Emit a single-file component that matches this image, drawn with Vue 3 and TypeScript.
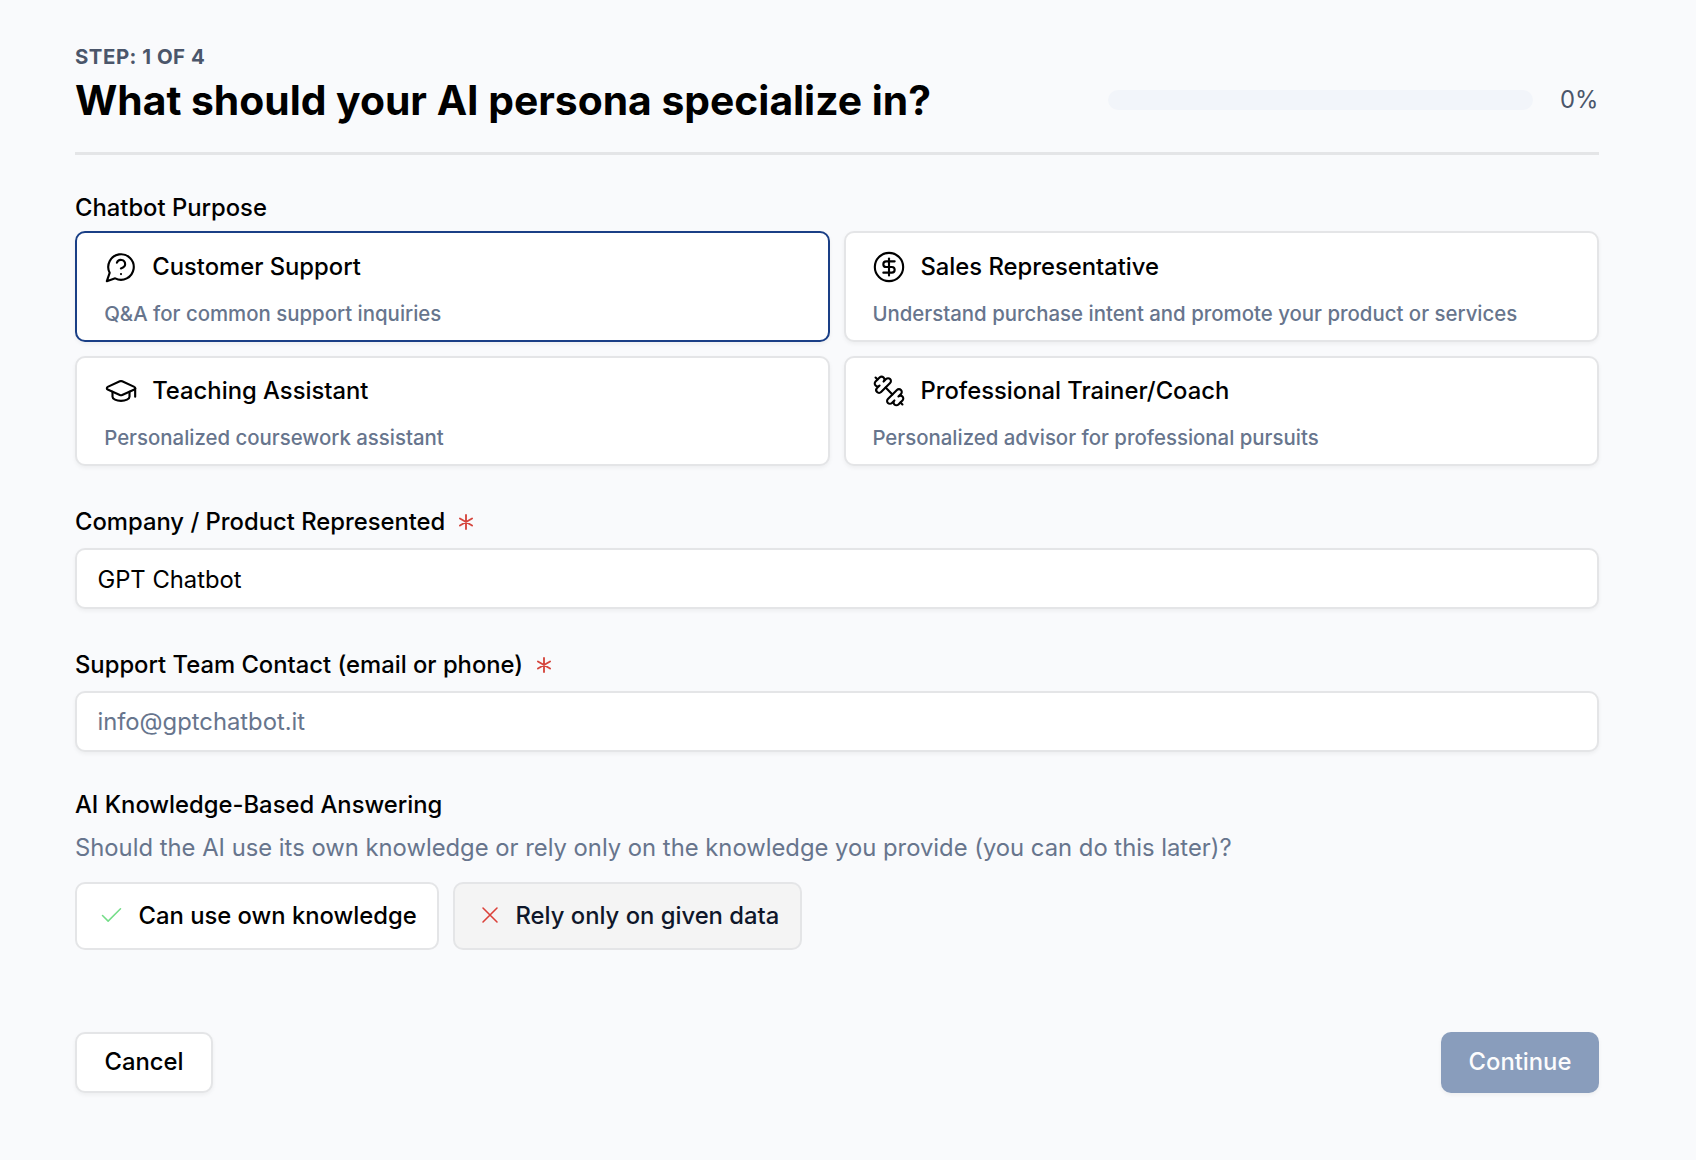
<script setup lang="ts">
import { ref } from 'vue'

interface Purpose {
  id: string
  title: string
  description: string
  paths: string[]
}

const purposes: Purpose[] = [
  {
    id: 'support',
    title: 'Customer Support',
    description: 'Q&A for common support inquiries',
    paths: ['M7.9 20A9 9 0 1 0 4 16.1L2 22Z', 'M9.09 9a3 3 0 0 1 5.83 1c0 2-3 3-3 3', 'M12 17h.01'],
  },
  {
    id: 'sales',
    title: 'Sales Representative',
    description: 'Understand purchase intent and promote your product or services',
    paths: ['M2 12a10 10 0 1 0 20 0a10 10 0 1 0-20 0', 'M16 8h-6a2 2 0 1 0 0 4h4a2 2 0 1 1 0 4H8', 'M12 18V6'],
  },
  {
    id: 'teaching',
    title: 'Teaching Assistant',
    description: 'Personalized coursework assistant',
    paths: [
      'M21.42 10.922a1 1 0 0 0-.019-1.838L12.83 5.18a2 2 0 0 0-1.66 0L2.6 9.08a1 1 0 0 0 0 1.832l8.57 3.908a2 2 0 0 0 1.66 0z',
      'M22 10v6',
      'M6 12.5V16a6 3 0 0 0 12 0v-3.5',
    ],
  },
  {
    id: 'coach',
    title: 'Professional Trainer/Coach',
    description: 'Personalized advisor for professional pursuits',
    paths: [
      'M14.4 14.4 9.6 9.6',
      'M18.657 21.485a2 2 0 1 1-2.829-2.828l-1.767 1.768a2 2 0 1 1-2.829-2.829l6.364-6.364a2 2 0 1 1 2.829 2.829l-1.768 1.767a2 2 0 1 1 2.828 2.829z',
      'm21.5 21.5-1.4-1.4',
      'M3.9 3.9 2.5 2.5',
      'M6.404 12.768a2 2 0 1 1-2.829-2.829l1.768-1.767a2 2 0 1 1-2.828-2.829l2.828-2.828a2 2 0 1 1 2.829 2.828l1.767-1.768a2 2 0 1 1 2.829 2.829z',
    ],
  },
]

const selected = ref('support')
const progress = ref(0)
const company = ref('GPT Chatbot')
const contact = ref('')
const ownKnowledge = ref(false)
</script>

<template>
  <main class="page">
    <header class="header">
      <div>
        <div class="step">STEP: 1 OF 4</div>
        <h1 class="title">What should your AI persona specialize in?</h1>
      </div>
      <div class="progress">
        <div class="track"><div class="fill" :style="{ width: progress + '%' }"></div></div>
        <span class="percent">{{ progress }}%</span>
      </div>
    </header>

    <section class="purpose">
      <div class="label">Chatbot Purpose</div>
      <div class="grid">
        <div
          v-for="p in purposes"
          :key="p.id"
          class="card"
          :class="{ active: selected === p.id }"
          @click="selected = p.id"
        >
          <div class="card-head">
            <svg class="icon" viewBox="0 0 24 24"><path v-for="d in p.paths" :key="d" :d="d" /></svg>
            <span>{{ p.title }}</span>
          </div>
          <div class="card-text">{{ p.description }}</div>
        </div>
      </div>
    </section>

    <section class="field">
      <label class="label" for="company">
        <span>Company / Product Represented</span>
        <svg class="star" viewBox="0 0 24 24"><path d="M12 6v12M17.196 9 6.804 15M6.804 9l10.392 6" /></svg>
      </label>
      <input id="company" v-model="company" class="input filled" type="text" />
    </section>

    <section class="field">
      <label class="label" for="contact">
        <span>Support Team Contact (email or phone)</span>
        <svg class="star" viewBox="0 0 24 24"><path d="M12 6v12M17.196 9 6.804 15M6.804 9l10.392 6" /></svg>
      </label>
      <input id="contact" v-model="contact" class="input" type="text" placeholder="info@gptchatbot.it" />
    </section>

    <section class="answering">
      <div class="label">AI Knowledge-Based Answering</div>
      <p class="hint">Should the AI use its own knowledge or rely only on the knowledge you provide (you can do this later)?</p>
      <div class="choices">
        <button class="choice own" :class="{ on: ownKnowledge }" type="button" @click="ownKnowledge = true">
          <svg class="mark check" viewBox="0 0 24 24"><path d="M20 6 9 17l-5-5" /></svg>
          <span>Can use own knowledge</span>
        </button>
        <button class="choice given" :class="{ on: !ownKnowledge }" type="button" @click="ownKnowledge = false">
          <svg class="mark cross" viewBox="0 0 24 24"><path d="M18 6 6 18M6 6l12 12" /></svg>
          <span>Rely only on given data</span>
        </button>
      </div>
    </section>

    <footer class="footer">
      <button class="btn cancel" type="button">Cancel</button>
      <button class="btn continue" type="button" disabled>Continue</button>
    </footer>
  </main>
</template>

<style>
body {
  background: #f9fafc;
}
</style>

<style scoped>
.page {
  box-sizing: border-box;
  width: 1696px;
  height: 1160px;
  padding: 42px 97px 0 75px;
  background: #f9fafc;
  color: #000;
  font-family: Inter, 'Liberation Sans', sans-serif;
  font-size: 23.8px;
  line-height: 27px;
}
.header {
  display: flex;
  justify-content: space-between;
  align-items: flex-start;
  height: 110px;
  border-bottom: 3px solid #e4e5e7;
}
.step {
  height: 28px;
  padding-top: 1px;
  line-height: 28px;
  font-size: 20.4px;
  font-weight: 700;
  letter-spacing: 0.025em;
  color: #4b566a;
}
.title {
  margin: 9px 0 0;
  height: 40px;
  line-height: 40px;
  font-size: 40.8px;
  font-weight: 700;
  white-space: nowrap;
}
.progress {
  display: flex;
  align-items: center;
  justify-content: space-between;
  width: 491px;
  height: 30px;
  margin-top: 43px;
}
.track {
  width: 425px;
  height: 20px;
  border-radius: 10px;
  background: #f2f5fa;
  overflow: hidden;
}
.fill {
  height: 100%;
  background: #1a3f86;
}
.percent {
  padding: 0 0.5px 1px 0;
  color: #4b566a;
}
.label {
  display: flex;
  align-items: center;
  height: 27px;
  font-weight: 500;
  white-space: nowrap;
}
.purpose {
  margin-top: 39px;
}
.grid {
  display: grid;
  grid-template-columns: 755px 755px;
  grid-template-rows: 111px 110px;
  gap: 14px;
  margin-top: 10px;
}
.card {
  box-sizing: border-box;
  padding: 16px 26.4px 0;
  border: 2px solid #e4e5e7;
  border-radius: 10px;
  background: #fff;
  box-shadow: 0 2px 4px rgba(0, 0, 0, 0.05);
  font-weight: 500;
}
.card:nth-child(odd) {
  padding-left: 27.2px;
}
.card:nth-child(n + 3) {
  padding-top: 15px;
}
.card.active {
  border-color: #1a3f86;
}
.card-head {
  display: flex;
  align-items: center;
  gap: 14px;
  height: 34px;
}
.icon {
  width: 34px;
  height: 34px;
  margin-top: 1.6px;
  stroke-width: 1.5;
}
svg {
  flex: none;
  fill: none;
  stroke: currentColor;
  stroke-linecap: round;
  stroke-linejoin: round;
}
.card-text {
  margin-top: 17px;
  height: 28px;
  line-height: 28px;
  font-size: 20.4px;
  color: #67758d;
  white-space: nowrap;
}
.field {
  margin-top: 42px;
}
.star {
  width: 28px;
  height: 28px;
  margin-left: 6.6px;
  color: #d5453d;
  stroke-width: 1.6;
}
.input {
  box-sizing: border-box;
  display: block;
  width: 100%;
  height: 61px;
  margin-top: 13px;
  padding: 0 20.4px;
  border: 2px solid #e4e5e7;
  border-radius: 10px;
  background: #fff;
  box-shadow: 0 2px 4px rgba(0, 0, 0, 0.05);
  color: #000;
  font: inherit;
  outline: none;
}
.input.filled {
  padding-top: 2px;
}
.input::placeholder {
  color: #67758d;
  opacity: 1;
}
.answering {
  margin-top: 39px;
}
.hint {
  margin: 16px 0 0;
  color: #67758d;
  white-space: nowrap;
}
.choices {
  display: flex;
  gap: 14px;
  margin-top: 21px;
}
.choice {
  box-sizing: border-box;
  display: flex;
  align-items: center;
  gap: 13.5px;
  height: 68px;
  padding: 0 0 2px 21px;
  border: 2px solid #e4e5e7;
  border-radius: 10px;
  background: #fff;
  color: #000;
  font: inherit;
  font-weight: 500;
  white-space: nowrap;
}
.choice.on {
  background: #f4f4f4;
  color: #0f172a;
}
.own {
  width: 364px;
}
.given {
  width: 349px;
  gap: 12.5px;
}
.mark {
  width: 27px;
  height: 27px;
  stroke-width: 1.35;
}
.check {
  color: #74dd88;
}
.cross {
  width: 28px;
  height: 28px;
  margin: 0 -0.5px;
  color: #db4039;
}
.footer {
  display: flex;
  justify-content: space-between;
  margin-top: 82px;
}
.btn {
  box-sizing: border-box;
  height: 61px;
  padding: 0 0 2px;
  border: 2px solid #e4e5e7;
  border-radius: 10px;
  background: #fff;
  box-shadow: 0 2px 4px rgba(0, 0, 0, 0.05);
  color: #000;
  font: inherit;
  font-weight: 500;
}
.cancel {
  width: 138px;
}
.continue {
  width: 158px;
  border: 0;
  background: #899dbc;
  color: #fcfcfd;
}
</style>
